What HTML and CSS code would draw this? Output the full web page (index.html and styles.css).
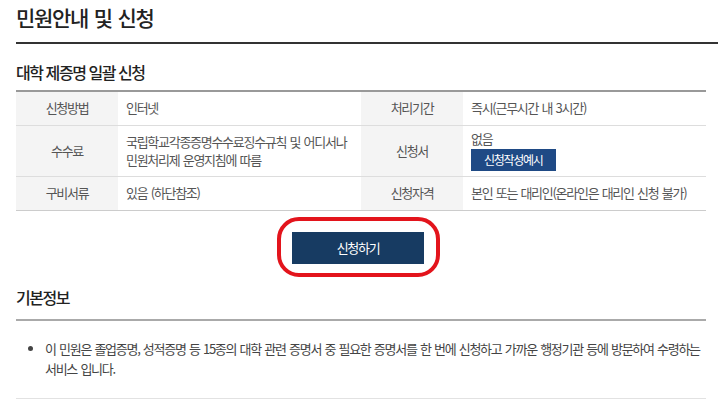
FILE: index.html
```html
<!DOCTYPE html>
<html lang="ko">
<head>
    <meta charset="UTF-8">
    <meta name="viewport" content="width=device-width, initial-scale=1.0">
    <title>민원안내 및 신청</title>
    <link rel="stylesheet" href="styles.css">
</head>
<body>
    <div class="container">
        <h2 class="page-title">민원안내 및 신청</h2>

        <h3 class="sub-title">대학 제증명 일괄 신청</h3>
        <table class="info-table">
            <colgroup>
                <col class="col-label">
                <col class="col-value">
                <col class="col-label">
                <col class="col-value">
            </colgroup>
            <tr class="row-short">
                <th>신청방법</th>
                <td>인터넷</td>
                <th>처리기간</th>
                <td>즉시(근무시간 내 3시간)</td>
            </tr>
            <tr class="row-tall">
                <th>수수료</th>
                <td class="nowrap">국립학교각종증명수수료징수규칙 및 어디서나<br>민원처리제 운영지침에 따름</td>
                <th>신청서</th>
                <td>
                    <div>없음</div>
                    <a href="#" class="btn-sample">신청작성예시</a>
                </td>
            </tr>
            <tr class="row-short">
                <th>구비서류</th>
                <td>있음 (하단참조)</td>
                <th>신청자격</th>
                <td class="nowrap">본인 또는 대리인(온라인은 대리인 신청 불가)</td>
            </tr>
        </table>

        <div class="apply-area">
            <div class="apply-wrap">
                <a href="#" class="btn-apply">신청하기</a>
                <span class="highlight"></span>
            </div>
        </div>

        <h3 class="sub-title section-line">기본정보</h3>
        <ul class="desc-list">
            <li>이 민원은 졸업증명, 성적증명 등 15종의 대학 관련 증명서 중 필요한 증명서를 한 번에 신청하고 가까운 행정기관 등에 방문하여 수령하는 서비스 입니다.</li>
        </ul>
    </div>
</body>
</html>
```

FILE: styles.css
```css
body {
    margin: 0;
    padding: 0;
    background: #ffffff;
    color: #444444;
    font-family: "Noto Sans CJK KR", "Noto Sans", sans-serif;
    letter-spacing: -0.08em;
    word-spacing: 1px;
}
.container {
    padding: 0 12px 0 16px;
}
.page-title {
    margin: 0 -12px 0 0;
    padding: 3px 0 11px;
    font-size: 21px;
    line-height: 28px;
    font-weight: 500;
    color: #222222;
    border-bottom: 2px solid #333333;
}
.sub-title {
    margin: 16px 0 6px;
    font-size: 16px;
    line-height: 24px;
    font-weight: 500;
    color: #222222;
    letter-spacing: -0.09em;
    word-spacing: 0;
}
.info-table {
    width: 690px;
    border-collapse: collapse;
    table-layout: fixed;
    border-top: 2px solid #999999;
    border-bottom: 1px solid #cccccc;
    font-size: 13px;
    line-height: 18px;
}
.col-label {
    width: 102px;
}
.col-value {
    width: 243px;
}
.info-table th {
    background: #f4f4f4;
    font-weight: 400;
    color: #555555;
    text-align: center;
    padding: 0;
}
.info-table td {
    padding: 0 8px;
    color: #555555;
}
.info-table td.nowrap {
    white-space: nowrap;
}
.info-table tr + tr th,
.info-table tr + tr td {
    border-top: 1px solid #dddddd;
}
.row-short {
    height: 34px;
}
.row-tall {
    height: 51px;
}
.btn-sample {
    display: inline-block;
    margin-top: 1px;
    padding: 0 13px;
    height: 22px;
    line-height: 22px;
    background: #1f4a85;
    color: #ffffff;
    font-size: 12px;
    text-decoration: none;
}
.apply-area {
    display: flex;
    justify-content: center;
    padding: 21px 0 0;
    margin-left: -6px;
}
.apply-wrap {
    position: relative;
}
.btn-apply {
    display: block;
    width: 132px;
    height: 32px;
    line-height: 32px;
    text-align: center;
    background: #173b62;
    color: #ffffff;
    font-size: 13px;
    text-decoration: none;
}
.highlight {
    position: absolute;
    top: -15px;
    left: -15px;
    right: -16px;
    bottom: -13px;
    border: 4px solid #e3141c;
    border-radius: 22px;
}
.section-line {
    margin: 21px 0 0;
    padding-bottom: 10px;
    width: 690px;
    border-bottom: 2px solid #aaaaaa;
}
.desc-list {
    width: 690px;
    margin: 0;
    padding: 18px 0 19px 29px;
    box-sizing: border-box;
    border-bottom: 1px solid #e2e2e2;
    font-size: 13px;
    line-height: 20px;
    color: #444444;
}
```
